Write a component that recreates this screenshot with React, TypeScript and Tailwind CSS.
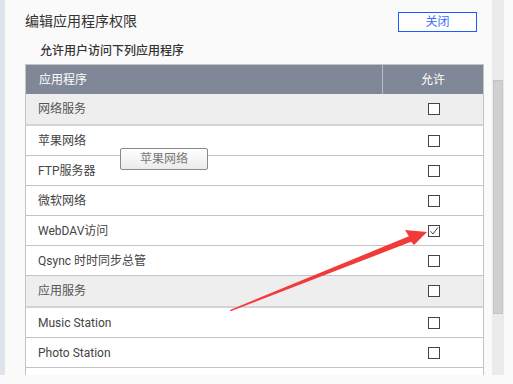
import React from 'react';

const rows = [
  { name: '网络服务', group: true, checked: false },
  { name: '苹果网络', checked: false },
  { name: 'FTP服务器', checked: false },
  { name: '微软网络', checked: false },
  { name: 'WebDAV访问', checked: true },
  { name: 'Qsync 时时同步总管', checked: false },
  { name: '应用服务', group: true, checked: false },
  { name: 'Music Station', checked: false },
  { name: 'Photo Station', checked: false },
  { name: '', checked: false },
];

function Checkbox({ checked }: { checked: boolean }) {
  return (
    <div className="w-[12px] h-[12px] border border-[#444] bg-white flex items-center justify-center">
      {checked && (
        <svg width="10" height="10" viewBox="0 0 10 10">
          <path d="M1.5 5.2 L4 8 L8.8 1.5" fill="none" stroke="#444" strokeWidth="1" />
        </svg>
      )}
    </div>
  );
}

export default function App() {
  return (
    <div
      className="relative w-[513px] h-[384px] bg-[#fafafa] overflow-hidden"
      style={{ fontFamily: 'Roboto, "Noto Sans CJK SC", sans-serif' }}
    >
      <div className="flex h-[375px]">
        <div className="w-[5px] bg-[#dde4ec]" />
        <div className="flex-1 overflow-hidden pl-[20px] pr-[8px]">
          <div className="flex items-center justify-between h-[41px] pt-[2px]">
            <span className="text-[14px] text-[#333]">编辑应用程序权限</span>
            <button className="w-[79px] h-[20px] mr-[7px] border border-[#1a5cff] bg-white text-[12px] text-[#3b6cff] leading-none">
              关闭
            </button>
          </div>
          <div className="h-[23px] pl-[15px] text-[12px] text-[#333] font-medium leading-[20px]">
            允许用户访问下列应用程序
          </div>
          <div className="w-[459px] border-x border-t border-[#c4c4c4] text-[12px]">
            <div className="flex h-[29px] bg-[#808796] text-white items-center">
              <div className="w-[357px] h-full flex items-center pl-[13px] border-r border-[#b8bcc6]">应用程序</div>
              <div className="flex-1 text-center">允许</div>
            </div>
            {rows.map((r, i) => (
              <div
                key={i}
                className={
                  r.group
                    ? 'flex h-[32px] items-center bg-[#eeeeee] border-b-2 border-[#d4d4d4] text-[#555]'
                    : 'flex h-[30px] items-center bg-white border-b border-[#c4c4c4] text-[#444]'
                }
              >
                <div className="w-[358px] pl-[12px]">{r.name}</div>
                <div className="flex-1 flex justify-center">
                  <Checkbox checked={r.checked} />
                </div>
              </div>
            ))}
          </div>
        </div>
        <div className="w-[12px] bg-[#ebebeb] pt-[80px] px-[1px]">
          <div className="h-[234px] bg-[#d0d0d0] border border-[#c4c4c4]" />
        </div>
        <div className="w-[9px]" />
      </div>

      <div className="absolute left-[120px] top-[148px] w-[88px] h-[22px] rounded-[2px] border border-[#8a8a8a] bg-gradient-to-b from-white to-[#ebebeb] text-[12px] text-[#777] flex items-center justify-center">
        苹果网络
      </div>

      <svg className="absolute left-0 top-0" width="513" height="384" viewBox="0 0 513 384">
        <polygon
          points="230,310 408.9,236.2 405,230 427,232 414,245 411.1,241.8 230.6,311.2"
          fill="#f23a3a"
        />
      </svg>
    </div>
  );
}
